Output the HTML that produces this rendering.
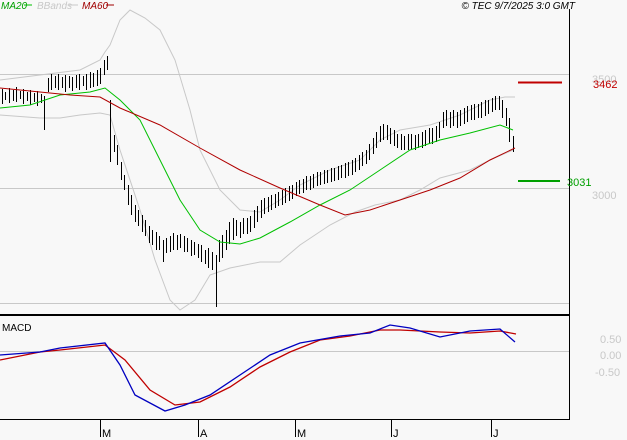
<!DOCTYPE html>
<html><head><style>
body{margin:0;background:#f8f8f8;}
svg{display:block;font-family:"Liberation Sans",sans-serif;}
</style></head><body>
<svg width="627" height="440" viewBox="0 0 627 440" xmlns="http://www.w3.org/2000/svg">
<rect width="627" height="440" fill="#f8f8f8"/>
<g stroke="#c8c8c8" stroke-width="1">
<line x1="0" y1="74.5" x2="569" y2="74.5"/>
<line x1="0" y1="188.5" x2="569" y2="188.5"/>
<line x1="0" y1="303.5" x2="569" y2="303.5"/>
<line x1="0" y1="351.5" x2="569" y2="351.5"/>
</g>
<line x1="569.5" y1="9" x2="569.5" y2="419" stroke="#000"/>
<line x1="0" y1="315" x2="570" y2="315" stroke="#000" stroke-width="2"/>
<line x1="0" y1="419.5" x2="570" y2="419.5" stroke="#000"/>
<g fill="none" stroke="#c8c8c8" stroke-width="1">
<polyline points="0,80 40,75 80,70 100,60 105,52 110,45 120,20 130,10 145,18 160,30 175,60 190,110 200,150 220,190 240,210 260,212 280,200 300,185 330,170 360,160 380,140 400,130 430,125 460,115 490,100 505,97 515,97"/>
<polyline points="0,115 40,118 60,118 80,115 100,113 110,115 120,150 140,210 155,260 170,300 180,310 195,300 210,275 230,268 260,262 280,262 300,245 330,225 355,212 375,205 400,200 420,190 440,178 470,170 490,160 513,150"/>
</g>
<path fill="none" stroke="#000" stroke-width="1" d="
M2.5 89V104M5.5 92V100M9.5 88V103M13.5 90V101M16.5 87V102M20.5 91V99M23.5 89V104M27.5 92V101M30.5 90V105M34.5 93V102M37.5 91V106M41.5 94V103M44.5 96V130M48.5 78V92M51.5 74V90M55.5 76V88M58.5 74V90M62.5 77V88M65.5 75V92M69.5 76V88M72.5 77V91M76.5 75V88M79.5 74V90M83.5 76V86M86.5 74V90M90.5 72V88M93.5 73V87M97.5 70V86M100.5 68V84M104.5 60V75M107.5 56V70M110.5 100V162M114.5 135V152M117.5 145V165M121.5 162V180M124.5 175V190M128.5 185V205M131.5 195V215M135.5 205V222M138.5 210V226M142.5 215V232M145.5 220V236M149.5 226V243M152.5 230V245M156.5 232V250M159.5 236V250M163.5 240V262M166.5 238V253M170.5 236V252M173.5 233V250M177.5 235V250M180.5 234V248M184.5 236V252M187.5 238V252M191.5 240V256M194.5 242V255M198.5 244V258M201.5 245V262M205.5 250V264M208.5 248V268M212.5 252V270M216.5 255V307M219.5 240V262M222.5 235V258M226.5 230V250M229.5 222V244M233.5 218V240M236.5 220V236M240.5 222V238M243.5 218V234M247.5 218V234M250.5 216V232M254.5 210V228M257.5 206V222M261.5 200V218M264.5 198V214M268.5 197V212M271.5 195V210M275.5 194V208M278.5 192V206M282.5 190V205M285.5 188V203M289.5 186V201M292.5 185V199M296.5 182V196M299.5 180V194M303.5 179V193M306.5 176V190M310.5 176V190M313.5 174V188M317.5 172V186M320.5 172V185M324.5 170V184M327.5 170V183M331.5 168V182M334.5 168V181M338.5 166V180M341.5 165V178M345.5 163V178M348.5 162V176M352.5 160V175M355.5 158V172M359.5 155V170M362.5 152V166M366.5 150V164M369.5 144V160M373.5 138V154M376.5 132V148M380.5 126V142M383.5 124V140M387.5 125V140M390.5 128V144M394.5 130V146M397.5 134V148M401.5 134V150M404.5 136V150M408.5 134V150M411.5 134V149M415.5 135V150M418.5 134V148M422.5 132V148M425.5 130V146M429.5 128V144M432.5 128V144M436.5 126V142M439.5 122V138M443.5 112V128M446.5 110V126M450.5 112V128M453.5 110V126M457.5 112V128M460.5 110V126M464.5 108V124M467.5 106V122M471.5 105V120M474.5 104V120M478.5 104V118M481.5 102V118M485.5 100V116M488.5 100V114M492.5 98V112M495.5 96V110M499.5 96V110M502.5 100V118M506.5 108V126M509.5 118V142M513.5 136V152"/>
<polyline fill="none" stroke="#00c000" points="0,108 30,105 60,95 90,92 105,88 120,100 140,120 160,160 180,200 200,230 220,242 240,244 260,238 290,222 320,205 350,190 380,170 410,150 440,140 470,133 500,125 513,130"/>
<polyline fill="none" stroke="#b00000" points="0,88 40,92 70,95 100,97 120,108 160,125 200,148 240,170 280,188 320,205 345,215 370,210 400,200 430,190 460,178 490,160 515,148"/>
<line x1="518" y1="82.5" x2="562" y2="82.5" stroke="#c00000" stroke-width="2"/>
<line x1="518" y1="181" x2="560" y2="181" stroke="#00a000" stroke-width="2"/>
<g font-size="11">
<text x="592" y="83" fill="#c8c8c8">3500</text>
<text x="593" y="88" fill="#c00000">3462</text>
<text x="567" y="186" fill="#00a000">3031</text>
<text x="592" y="199" fill="#c8c8c8">3000</text>
<text x="600" y="343" fill="#c8c8c8">0.50</text>
<text x="600" y="359" fill="#c8c8c8">0.00</text>
<text x="595" y="376" fill="#c8c8c8">-0.50</text>
</g>
<polyline fill="none" stroke="#c00000" stroke-width="1.3" points="0,360 40,352 60,350 105,345 125,360 150,390 175,405 200,402 230,387 260,367 290,352 320,340 350,336 380,330 400,330 440,332 470,333 500,331 516,334"/>
<polyline fill="none" stroke="#0000c0" stroke-width="1.3" points="0,355 40,352 60,348 105,343 120,365 135,395 165,411 185,405 210,395 240,375 270,355 300,343 340,336 370,333 390,325 410,328 440,337 470,331 500,329 515,342"/>
<text x="2" y="331" font-size="10" fill="#000">MACD</text>
<g font-size="10" font-style="italic">
<text x="1" y="9" fill="#00a000">MA20</text>
<line x1="24" y1="5" x2="32" y2="5" stroke="#00c000"/>
<text x="37" y="9" fill="#c8c8c8">BBands</text>
<line x1="69" y1="5" x2="78" y2="5" stroke="#c8c8c8"/>
<text x="82" y="9" fill="#a00000">MA60</text>
<line x1="106" y1="5" x2="114" y2="5" stroke="#a00000"/>
<text x="575" y="9" fill="#000" text-anchor="end">© TEC 9/7/2025 3:0 GMT</text>
</g>
<g stroke="#000">
<line x1="100.5" y1="420" x2="100.5" y2="437"/>
<line x1="198.5" y1="420" x2="198.5" y2="437"/>
<line x1="295.5" y1="420" x2="295.5" y2="437"/>
<line x1="391.5" y1="420" x2="391.5" y2="437"/>
<line x1="491.5" y1="420" x2="491.5" y2="437"/>
</g>
<g font-size="11" fill="#000">
<text x="102" y="437">M</text>
<text x="200" y="437">A</text>
<text x="297" y="437">M</text>
<text x="393" y="437">J</text>
<text x="493" y="437">J</text>
</g>
</svg>
</body></html>
